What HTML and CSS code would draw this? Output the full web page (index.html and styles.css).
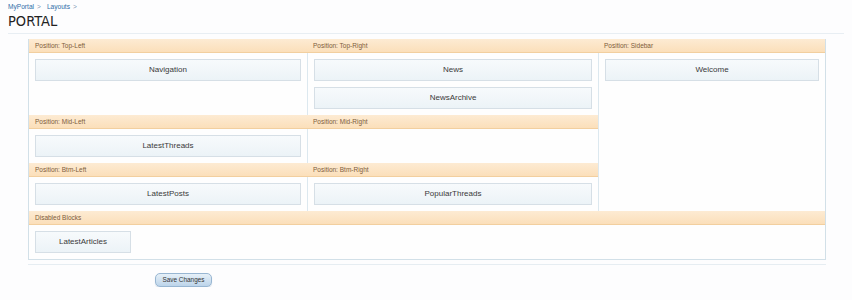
FILE: index.html
```html
<!DOCTYPE html>
<html lang="en">
<head>
<meta charset="utf-8">
<title>Portal Layout</title>
<link rel="stylesheet" href="styles.css">
</head>
<body>
<div class="page">
  <div class="breadcrumb"><a href="#">MyPortal</a><span class="sep">&gt;</span><a href="#">Layouts</a><span class="sep">&gt;</span></div>
  <h1 class="title">PORTAL</h1>
  <div class="layout">
    <section class="cell c1">
      <div class="head">Position: Top-Left</div>
      <div class="body"><div class="block">Navigation</div></div>
    </section>
    <section class="cell c2">
      <div class="head">Position: Top-Right</div>
      <div class="body"><div class="block">News</div><div class="block">NewsArchive</div></div>
    </section>
    <section class="cell c3 sidebar">
      <div class="head">Position: Sidebar</div>
      <div class="body"><div class="block">Welcome</div></div>
    </section>
    <section class="cell c1">
      <div class="head">Position: Mid-Left</div>
      <div class="body"><div class="block">LatestThreads</div></div>
    </section>
    <section class="cell c2">
      <div class="head">Position: Mid-Right</div>
      <div class="body"></div>
    </section>
    <section class="cell c1">
      <div class="head">Position: Btm-Left</div>
      <div class="body"><div class="block">LatestPosts</div></div>
    </section>
    <section class="cell c2">
      <div class="head">Position: Btm-Right</div>
      <div class="body"><div class="block">PopularThreads</div></div>
    </section>
    <section class="cell disabled">
      <div class="head">Disabled Blocks</div>
      <div class="body"><div class="block small">LatestArticles</div></div>
    </section>
  </div>
  <div class="submit-row">
    <button class="btn" type="button">Save Changes</button>
  </div>
</div>
</body>
</html>
```
FILE: styles.css
```css
* { box-sizing: border-box; }
html, body { margin: 0; padding: 0; background: #fdfdfe; }
body { font-family: "Liberation Sans", Arial, sans-serif; color: #333; }
.page { padding: 0 8px; width: 852px; }
.breadcrumb { font-size: 6.6px; line-height: 9px; padding-top: 2px; height: 11px; }
.breadcrumb a { color: #2f6ea8; text-decoration: none; }
.breadcrumb .sep { color: #7d98b3; margin: 0 6px 0 3px; }
.title {
  font-family: "Liberation Sans Narrow", "DejaVu Sans Condensed", "Liberation Sans", sans-serif;
  font-size: 14.5px; font-weight: normal; color: #222; line-height: 16px;
  margin: 0; padding: 2px 0 4px; border-bottom: 1px solid #e8eef3;
}
.layout {
  display: grid;
  grid-template-columns: 278px 291px 227px;
  width: 798px;
  margin: 5px 0 0 20px;
  border: 1px solid #d2e0e8;
  border-top: none;
}
.cell { display: flex; flex-direction: column; }
.c1 { grid-column: 1; }
.c2 { grid-column: 2; }
.c3 { grid-column: 3; }
.sidebar { grid-row: 1 / span 3; }
.disabled { grid-column: 1 / span 3; }
.head {
  height: 14px;
  background: linear-gradient(#fdebd3, #fbdfba);
  border-bottom: 1px solid #f2cf9f;
  color: #7d5c3b;
  font-size: 6.5px;
  line-height: 13px;
  padding-left: 6px;
}
.body {
  flex: 1;
  display: flex; flex-direction: column; gap: 6px;
  padding: 6px;
  min-height: 34px;
  background: #fefefe;
}
.c2 .body, .c3 .body { border-left: 1px solid #dce8ef; }
.block {
  height: 22px;
  border: 1px solid #d6dfe6;
  background: linear-gradient(#f7fafc, #ecf3f7);
  color: #3a3a3a;
  font-size: 8px;
  text-align: center;
  line-height: 20px;
}
.block.small { width: 96px; }
.submit-row {
  width: 798px;
  margin: 4px 0 0 20px;
  border-top: 1px solid #e6edf2;
  padding: 3px 0 0 127px;
}
.btn {
  width: 57px; height: 14px;
  padding: 0;
  border: 1px solid #98b6d2;
  border-radius: 5px;
  background: linear-gradient(#e6f0f8, #bcd4ea);
  font-family: "Liberation Sans Narrow", "Liberation Sans", sans-serif;
  font-size: 6.4px;
  color: #333;
  line-height: 12px;
  box-shadow: 0 1px 1px rgba(120,150,180,0.3);
}
```
